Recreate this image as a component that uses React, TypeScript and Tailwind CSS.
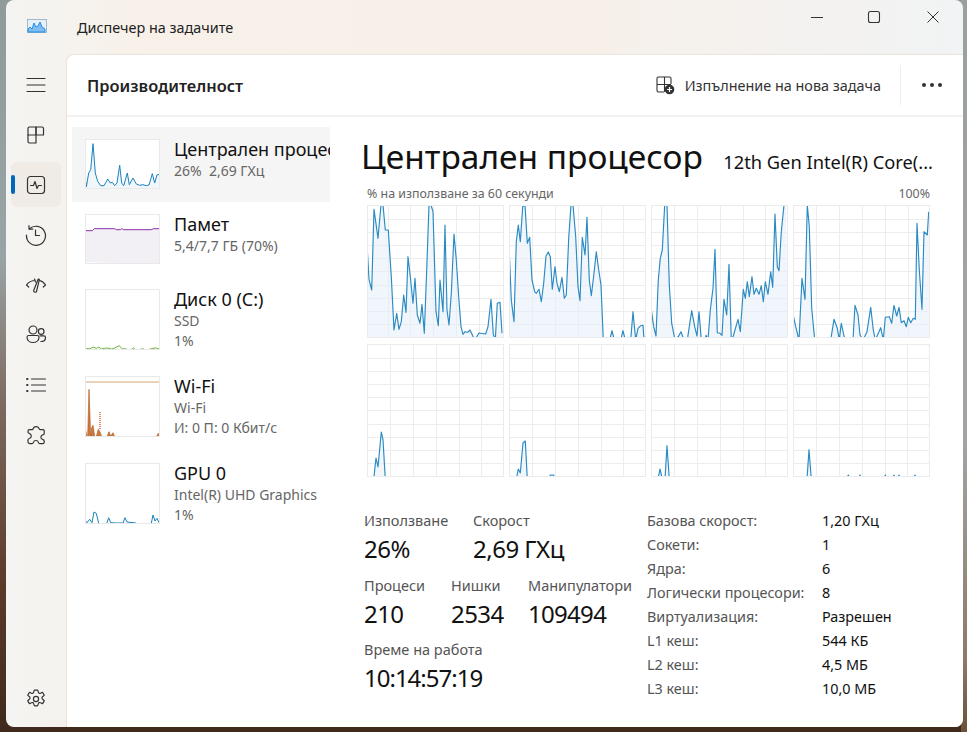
import React from "react";

type P = [number, number];

const cpu: { ox: number; pts: P[] }[] = [
  { ox: 22, pts: [[22,192],[28,298],[36,330],[43,88],[55,175],[64,75],[70,75],[77,150],[86,150],[95,290],[103,450],[111,400],[118,448],[125,425],[132,345],[139,397],[145,230],[152,290],[160,370],[166,295],[173,405],[181,430],[187,373],[194,460],[201,270],[208,75],[214,75],[220,95],[229,395],[236,437],[241,300],[250,395],[256,135],[262,390],[268,435],[275,340],[283,162],[290,240],[297,350],[304,440],[310,463],[316,455],[324,457],[331,450],[345,471],[358,459],[378,462],[385,440],[394,358],[401,463],[407,471],[413,370],[421,367],[427,460]] },
  { ox: 448, pts: [[448,198],[455,360],[463,425],[470,185],[476,135],[482,185],[489,80],[496,75],[503,190],[510,172],[517,300],[525,335],[530,340],[538,328],[545,365],[552,310],[559,228],[566,216],[572,230],[578,328],[586,260],[592,310],[599,335],[607,292],[614,355],[620,345],[627,175],[634,75],[640,75],[648,170],[655,320],[661,362],[668,172],[676,225],[682,112],[689,300],[695,347],[703,280],[710,215],[717,270],[724,315],[731,471],[750,471],[757,452],[764,471],[783,471],[790,452],[797,471],[813,471],[820,395],[828,471],[835,445],[843,437],[850,436],[853,471]] },
  { ox: 19, pts: [[19,382],[27,440],[34,468],[41,300],[47,235],[53,210],[60,75],[67,75],[74,315],[81,430],[91,471],[102,468],[109,455],[118,471],[128,471],[134,440],[141,392],[150,440],[157,468],[163,395],[170,471],[180,471],[184,466],[190,471],[197,390],[205,325],[211,208],[218,458],[226,460],[232,466],[238,358],[246,405],[253,253],[260,471],[266,468],[280,418],[287,455],[296,328],[302,355],[308,305],[314,350],[322,290],[328,343],[335,325],[343,343],[350,317],[356,365],[362,305],[370,343],[378,275],[384,322],[391,102],[398,260],[403,272],[410,155],[418,75],[424,75]] },
  { ox: 445, pts: [[445,402],[453,440],[463,471],[472,295],[481,358],[488,75],[494,140],[501,385],[510,471],[558,471],[568,418],[578,445],[584,471],[590,430],[598,468],[604,471],[625,471],[631,376],[640,405],[646,465],[655,471],[667,455],[678,382],[686,450],[692,471],[708,443],[716,471],[722,412],[734,410],[741,430],[748,376],[756,408],[763,382],[770,428],[778,422],[785,440],[791,412],[798,428],[806,415],[812,418],[817,130],[824,270],[832,388],[838,155],[848,165],[852,95]] },
];

const cpuLow: { ox: number; pts: P[] }[] = [
  { ox: 22, pts: [[22,409],[42,409],[49,355],[55,382],[65,277],[70,300],[77,409],[428,409]] },
  { ox: 448, pts: [[448,409],[470,409],[476,388],[482,400],[490,310],[497,304],[503,409],[567,409],[572,406],[582,406],[585,409],[853,409]] },
  { ox: 19, pts: [[19,409],[40,409],[46,388],[53,409],[61,409],[67,318],[74,409],[424,409]] },
  { ox: 445, pts: [[445,409],[487,409],[493,330],[500,409],[606,409],[611,406],[616,409],[642,409],[646,406],[650,409],[718,409],[722,406],[726,409],[744,409],[748,406],[752,409],[759,409],[763,406],[767,409],[807,409],[811,406],[815,409],[853,409]] },
];

const vLines = [
  [21, 43, 66, 89, 112],
  [23, 46, 69, 92, 114],
  [23, 46, 69, 92, 114],
  [23, 46, 69, 92, 115],
];
const hLines = [14, 27, 40, 53, 66, 80, 93, 106, 119];

function CpuChart({ series, top, base, v }: { series: { ox: number; pts: P[] }; top: number; base: number; v: number[] }) {
  const pts = series.pts.map(([x, y]) => {
    const px = (x - series.ox) / 3;
    const py = y >= base ? 135 : (y - top) / 3;
    return `${px.toFixed(1)},${py.toFixed(1)}`;
  });
  const line = pts.join(" ");
  return (
    <svg width="137" height="133" viewBox="0 0 137 133" className="block">
      {v.map((x) => (
        <line key={x} x1={x + 0.5} x2={x + 0.5} y1="0" y2="133" stroke="#ededed" strokeWidth="1" />
      ))}
      {hLines.map((y) => (
        <line key={y} x1="0" x2="137" y1={y + 0.5} y2={y + 0.5} stroke="#ededed" strokeWidth="1" />
      ))}
      <polygon points={`0,136 ${line} 137,136`} fill="#e4eff7" fillOpacity="0.55" />
      <polyline points={line} fill="none" stroke="#2a8ac2" strokeWidth="1.15" strokeLinejoin="round" />
      <rect x="0.5" y="0.5" width="136" height="132" fill="none" stroke="#ebebeb" />
    </svg>
  );
}

function scale(pts: P[], ox: number, oy: number) {
  return pts.map(([x, y]) => `${((x - ox) / 3).toFixed(1)},${((y - oy) / 3).toFixed(1)}`).join(" ");
}

const miniCpu = scale([[256,565],[256,530],[260,562],[267,520],[273,510],[280,432],[287,520],[294,545],[303,558],[313,558],[324,538],[332,550],[338,548],[345,558],[352,550],[360,497],[366,550],[372,558],[383,520],[389,555],[400,535],[410,553],[420,557],[430,555],[440,558],[448,556],[458,522],[465,550],[472,525],[478,525]], 256, 418);
const miniMem = scale([[16,398],[16,303],[38,303],[44,297],[105,297],[110,300],[122,300],[126,297],[132,300],[215,300],[222,297],[238,297]], 16, 253);
const miniDisk = scale([[256,332],[262,326],[270,328],[280,322],[290,326],[298,322],[305,328],[315,326],[325,325],[335,328],[345,325],[358,318],[368,327],[380,328],[390,332],[402,325],[410,332],[430,327],[438,332],[460,326],[470,325],[479,328]], 256, 148);
const miniGpu = scale([[16,452],[22,460],[30,450],[37,460],[43,428],[50,432],[58,466],[80,466],[87,445],[93,460],[110,461],[130,461],[136,445],[142,458],[168,461],[176,466],[180,462],[184,466],[214,466],[220,437],[226,455],[232,447],[238,460]], 16, 281);
const wifiA = [
  [[16,202],[16,175],[22,202]],
  [[24,202],[28,60],[33,202],[36,175],[40,168],[45,202]],
  [[50,202],[56,180],[62,190],[66,202]],
  [[82,202],[88,187],[93,200],[100,190],[105,202]],
  [[230,202],[236,192],[238,200],[238,202]],
] as P[][];

function Thumb({ h, children }: { h: number; children: React.ReactNode }) {
  return (
    <svg width="75" height={h} viewBox={`0 0 75 ${h}`} className="block shrink-0">
      {children}
      <rect x="0.5" y="0.5" width="74" height={h - 1} fill="none" stroke="#e9e9e9" />
    </svg>
  );
}

function ProcRow({ thumb, title, lines, rowH, active }: { thumb: React.ReactNode; title: string; lines: string[]; rowH: string; active?: boolean }) {
  return (
    <div className={`flex w-[258px] pl-[13px] pt-[12px] overflow-hidden ${rowH} ${active ? "bg-[#f5f5f5]" : ""}`}>
      {thumb}
      <div className="ml-[14px] whitespace-pre">
        <div className="text-[18px] leading-[22px] text-[#111] mt-[-1px]">{title}</div>
        {lines.map((l) => (
          <div key={l} className="text-[14px] leading-[20px] text-[#666] relative top-[1px]">
            {l}
          </div>
        ))}
      </div>
    </div>
  );
}

const ic = { fill: "none", stroke: "#333", strokeWidth: 1.2, strokeLinecap: "round", strokeLinejoin: "round" } as const;

function NavIcon({ children }: { children: React.ReactNode }) {
  return (
    <svg width="22" height="22" viewBox="0 0 22 22" {...ic}>
      {children}
    </svg>
  );
}

const navIcons: React.ReactNode[] = [
  <>
    <path d="M2 4.5h18M2 11h18M2 17.5h18" />
  </>,
  <>
    <path d="M3 4.5A1.5 1.5 0 0 1 4.5 3H11v16H4.5A1.5 1.5 0 0 1 3 17.5z" />
    <path d="M11 3h6a1.5 1.5 0 0 1 1.5 1.5V11H3M11 3v8" />
  </>,
  <>
    <rect x="2.5" y="2.5" width="17" height="17" rx="3" />
    <path d="M5.5 11.5h3l1.5-4 2 7 1.5-3h3" />
  </>,
  <>
    <path d="M4.5 4.8A9.5 9.5 0 1 1 1.5 11" />
    <path d="M4 1.5v3.6h3.8" />
    <path d="M10.5 6v5.5h4" />
  </>,
  <>
    <path d="M1.5 11C3 8.5 6 7 9 6.5M14.5 6.5C17 7 19 8.5 20.5 11M1.5 11l2.2 2M20.5 11l-2.2 2" />
    <path d="M8.7 16.5 13 5.5c.3-.8 1.6-.4 1.3.4L11.5 17.5c-.5 1.5-3.3.6-2.8-1z" />
    <path d="M9.5 5l1 3" />
  </>,
  <>
    <circle cx="8" cy="6" r="4" />
    <path d="M2 13.2A1.7 1.7 0 0 1 3.7 11.5h8.6A1.7 1.7 0 0 1 14 13.2c0 3.3-2.8 5.3-6 5.3s-6-2-6-5.3z" />
    <circle cx="16.2" cy="7.5" r="2.8" />
    <path d="M15 11.8h3.8c1 0 1.7.7 1.7 1.6 0 2.6-2 4.1-4.6 4.1" />
  </>,
  <>
    <path d="M6.5 5h14M6.5 11h14M6.5 17h14" />
    <path d="M2 5h.6M2 11h.6M2 17h.6" strokeWidth="1.8" />
  </>,
  <>
    <path d="M8 5.2a3.2 3.2 0 0 1 6.2-.4c.3.8 1 1 1.8.9h2a1.2 1.2 0 0 1 1.2 1.2v2.6c0 .8-.6 1.2-1.3 1.3a2.5 2.5 0 0 0 0 4.9c.7.1 1.3.5 1.3 1.3v1.3a1.4 1.4 0 0 1-1.4 1.4h-3c-.8 0-1.2-.6-1.4-1.3a2.6 2.6 0 0 0-5 0c-.2.7-.6 1.3-1.4 1.3H5a2 2 0 0 1-2-2v-1.8c0-.8.6-1.2 1.3-1.4a2.7 2.7 0 0 0 0-5.2C3.6 9.2 3 8.8 3 8V7.2A1.5 1.5 0 0 1 4.5 5.7H7c.6 0 1-.1 1-.5z" />
  </>,
];

const gear = (
  <NavIcon>
    <circle cx="11" cy="11" r="2.6" />
    <path d="M9.3 2.2a8.8 8.8 0 0 1 3.4 0l.6 2a1.6 1.6 0 0 0 2.3 1l1.9-.9a8.8 8.8 0 0 1 1.7 2.9l-1.5 1.4a1.6 1.6 0 0 0 0 2.7l1.5 1.4a8.8 8.8 0 0 1-1.7 2.9l-1.9-.9a1.6 1.6 0 0 0-2.3 1l-.6 2a8.8 8.8 0 0 1-3.4 0l-.6-2a1.6 1.6 0 0 0-2.3-1l-1.9.9a8.8 8.8 0 0 1-1.7-2.9l1.5-1.4a1.6 1.6 0 0 0 0-2.7L2.8 7.2a8.8 8.8 0 0 1 1.7-2.9l1.9.9a1.6 1.6 0 0 0 2.3-1z" />
  </NavIcon>
);

function Stat({ label, value, w, track }: { label: string; value: string; w?: string; track?: string }) {
  return (
    <div className={w}>
      <div className="text-[14.5px] leading-[20px] text-[#555] whitespace-nowrap">{label}</div>
      <div className={`mt-[1px] text-[24px] leading-[36px] text-[#111] whitespace-nowrap ${track ?? "tracking-[-0.5px]"}`}>{value}</div>
    </div>
  );
}

const specs: [string, string][] = [
  ["Базова скорост:", "1,20 ГХц"],
  ["Сокети:", "1"],
  ["Ядра:", "6"],
  ["Логически процесори:", "8"],
  ["Виртуализация:", "Разрешен"],
  ["L1 кеш:", "544 КБ"],
  ["L2 кеш:", "4,5 МБ"],
  ["L3 кеш:", "10,0 МБ"],
];

export default function App() {
  return (
    <div className="relative w-[967px] h-[732px] overflow-hidden font-['Noto_Sans','Open_Sans',sans-serif] bg-[linear-gradient(180deg,#8f9a9b_0%,#99a4a6_35%,#7d6a60_55%,#5b3a28_80%,#3f2a1c_100%)]">
      <div className="absolute right-0 top-0 h-full w-[6px] bg-[linear-gradient(180deg,#9aa0a0_0%,#a3a5a3_60%,#8d7a68_90%,#6b5138_100%)]" />
      <div className="relative ml-[6px] w-[957px] h-[727px] rounded-[8px] overflow-hidden flex flex-col bg-[linear-gradient(90deg,#f4f4f2_0%,#f7f1ea_12%,#f7f0e9_60%,#f1f3f4_100%)]">
        {/* title bar */}
        <div className="h-[54px] shrink-0 flex items-center">
          <svg width="22" height="16" viewBox="0 0 22 16" className="ml-[21px]">
            <rect x="0.5" y="0.5" width="19" height="13" fill="#e8f1f8" stroke="#9db8cf" />
            <path d="M1 10 3 8l2 2 2-6 2 4 2-1 2-4 2 5 3 2v3H1z" fill="#7fbdf0" stroke="#1c86dd" strokeWidth="0.9" />
          </svg>
          <div className="ml-[28px] pt-[1px] text-[14.4px] text-[#222]">Диспечер на задачите</div>
          <div className="ml-auto flex items-start h-full pt-[10px] text-[#222]">
            <svg width="14" height="14" viewBox="0 0 14 14" className="mr-[43px]">
              <path d="M1 7.5h12" stroke="#333" strokeWidth="1" />
            </svg>
            <svg width="14" height="14" viewBox="0 0 14 14" className="mr-[45px]">
              <rect x="1.5" y="1.5" width="11" height="11" rx="2" fill="none" stroke="#333" strokeWidth="1.1" />
            </svg>
            <svg width="14" height="14" viewBox="0 0 14 14" className="mr-[23px]">
              <path d="M1.5 1.5l11 11M12.5 1.5l-11 11" stroke="#333" strokeWidth="1" />
            </svg>
          </div>
        </div>
        <div className="flex-1 flex min-h-0">
          {/* nav */}
          <div className="w-[60px] shrink-0 flex flex-col pt-[8px] pb-[6px]">
            {navIcons.map((icon, i) => (
              <div key={i} className={`relative ml-[5px] w-[50px] h-[45px] mb-[5px] rounded-[6px] flex items-center justify-center ${i === 2 ? "bg-[#f0ebe5]" : ""}`}>
                {i === 2 && <div className="absolute left-0 top-[13px] w-[4px] h-[19px] rounded-full bg-[#0067c0]" />}
                <NavIcon>{icon}</NavIcon>
              </div>
            ))}
            <div className="mt-auto ml-[5px] w-[50px] h-[45px] flex items-center justify-center">{gear}</div>
          </div>
          {/* main */}
          <div className="flex-1 min-w-0 bg-white rounded-tl-[8px] border-l border-t border-[#e9e4dc] flex flex-col">
            <div className="h-[62px] shrink-0 flex items-center border-b-2 border-[#f3f1ef]">
              <div className="ml-[20px] pt-[3px] text-[16.4px] font-semibold text-[#222]">Производителност</div>
              <div className="ml-auto flex items-center">
                <svg width="20" height="20" viewBox="0 0 20 20" fill="none" stroke="#333" strokeWidth="1.1">
                  <path d="M9 17H3.5A1.5 1.5 0 0 1 2 15.5v-12A1.5 1.5 0 0 1 3.5 2h11A1.5 1.5 0 0 1 16 3.5V9M2 9.5h7.5V17M9.5 2v7.5H16" />
                  <circle cx="14.5" cy="14.5" r="4.8" fill="#333" stroke="none" />
                  <path d="M12 14.5h5M14.5 12v5" stroke="#fff" strokeWidth="1.2" />
                </svg>
                <div className="ml-[10px] pt-[2px] text-[14.4px] text-[#333]">Изпълнение на нова задача</div>
                <div className="ml-[19px] w-px h-[40px] bg-[#eeeeee]" />
                <div className="ml-[21px] mr-[21px] flex gap-[4px]">
                  <div className="w-[4px] h-[4px] rounded-full bg-[#333]" />
                  <div className="w-[4px] h-[4px] rounded-full bg-[#333]" />
                  <div className="w-[4px] h-[4px] rounded-full bg-[#333]" />
                </div>
              </div>
            </div>
            <div className="flex-1 flex min-h-0">
              {/* list */}
              <div className="ml-[5px] w-[258px] shrink-0 pt-[10px]">
                <ProcRow
                  active
                  rowH="h-[75px]"
                  title="Централен процесор"
                  lines={["26%  2,69 ГХц"]}
                  thumb={
                    <Thumb h={50}>
                      <rect x="0" y="0" width="75" height="50" fill="#fff" />
                      <polygon points={`${miniCpu} 74,49`} fill="#f1f6fa" />
                      <polyline points={miniCpu} fill="none" stroke="#1b81bd" strokeWidth="1" />
                    </Thumb>
                  }
                />
                <ProcRow
                  rowH="h-[75px]"
                  title="Памет"
                  lines={["5,4/7,7 ГБ (70%)"]}
                  thumb={
                    <Thumb h={50}>
                      <polygon points={`${miniMem} 75,50`} fill="#f2f0f4" />
                      <polyline points={miniMem} fill="none" stroke="#8b2fa8" strokeWidth="1" />
                    </Thumb>
                  }
                />
                <ProcRow
                  rowH="h-[87px]"
                  title="Диск 0 (C:)"
                  lines={["SSD", "1%"]}
                  thumb={
                    <Thumb h={61}>
                      <polyline points={miniDisk} fill="none" stroke="#6db33f" strokeWidth="1" />
                    </Thumb>
                  }
                />
                <ProcRow
                  rowH="h-[87px]"
                  title="Wi-Fi"
                  lines={["Wi-Fi", "И: 0 П: 0 Кбит/с"]}
                  thumb={
                    <Thumb h={61}>
                      <line x1="1" x2="74" y1="6" y2="6" stroke="#d9a273" strokeWidth="1" />
                      {wifiA.map((p, i) => (
                        <polygon key={i} points={scale(p, 16, 20)} fill="#c9793f" stroke="#b8622a" strokeWidth="0.7" />
                      ))}
                      <line x1="15" x2="15" y1="36" y2="54" stroke="#d9662a" strokeWidth="1.5" strokeDasharray="1 1" />
                    </Thumb>
                  }
                />
                <ProcRow
                  rowH="h-[87px]"
                  title="GPU 0"
                  lines={["Intel(R) UHD Graphics", "1%"]}
                  thumb={
                    <Thumb h={61}>
                      <polyline points={miniGpu} fill="none" stroke="#1b81bd" strokeWidth="1" />
                    </Thumb>
                  }
                />
              </div>
              {/* detail */}
              <div className="flex-1 min-w-0 relative">
                <div className="ml-[31px] mt-[17px] flex items-baseline whitespace-nowrap">
                  <div className="text-[33.5px] leading-[44px] text-[#111]">Централен процесор</div>
                  <div className="ml-auto mr-[30px] text-[18.3px] text-[#111]">12th Gen Intel(R) Core(...</div>
                </div>
                <div className="ml-[37px] mr-[33px] mt-[8px] flex justify-between text-[12.4px] leading-[16px] text-[#666]">
                  <span>% на използване за 60 секунди</span>
                  <span>100%</span>
                </div>
                <div className="ml-[37px] mt-[3px] grid grid-cols-[repeat(4,137px)] gap-x-[5px] gap-y-[6px]">
                  {cpu.map((s, i) => (
                    <CpuChart key={i} series={s} top={75} base={470} v={vLines[i]} />
                  ))}
                  {cpuLow.map((s, i) => (
                    <CpuChart key={i} series={s} top={13} base={409} v={vLines[1]} />
                  ))}
                </div>
                <div className="mt-[33px] ml-[34px] flex">
                  <div className="w-[283px]">
                    <div className="flex">
                      <Stat label="Използване" value="26%" w="w-[109px]" />
                      <Stat label="Скорост" value="2,69 ГХц" />
                    </div>
                    <div className="flex mt-[8px]">
                      <Stat label="Процеси" value="210" w="w-[87px]" track="tracking-[-0.6px]" />
                      <Stat label="Нишки" value="2534" w="w-[77px]" track="tracking-[-0.6px]" />
                      <Stat label="Манипулатори" value="109494" track="tracking-[-0.7px]" />
                    </div>
                    <div className="mt-[7px]">
                      <Stat label="Време на работа" value="10:14:57:19" track="tracking-[-1px]" />
                    </div>
                  </div>
                  <div className="mt-[-1px] grid grid-cols-[175px_1fr] auto-rows-[24px] text-[14.4px] leading-[24px] text-[#111] whitespace-nowrap">
                    {specs.map(([a, b]) => (
                      <React.Fragment key={a}>
                        <div className="text-[#555]">{a}</div>
                        <div>{b}</div>
                      </React.Fragment>
                    ))}
                  </div>
                </div>
              </div>
            </div>
          </div>
        </div>
      </div>
    </div>
  );
}
